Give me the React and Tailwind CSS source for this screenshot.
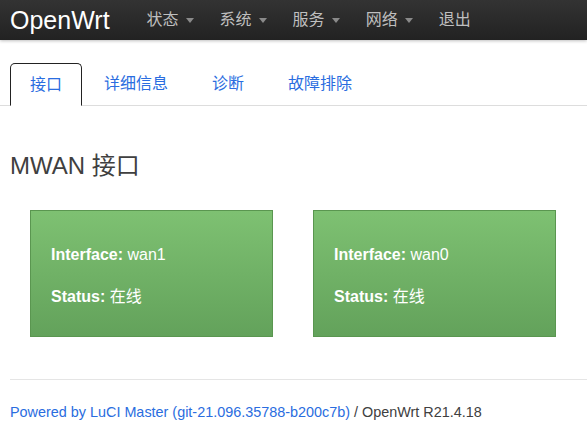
const FONT = { fontFamily: '"Liberation Sans", Arial, "Noto Sans CJK SC", sans-serif' }

const nav = [
  { label: '状态', menu: true },
  { label: '系统', menu: true },
  { label: '服务', menu: true },
  { label: '网络', menu: true },
  { label: '退出', menu: false },
]

const tabs = ['接口', '详细信息', '诊断', '故障排除']

const ifaces = [
  { name: 'wan1', status: '在线' },
  { name: 'wan0', status: '在线' },
]

function Caret() {
  return <span className="ml-[7px] inline-block h-0 w-0 border-x-[4px] border-t-[5px] border-x-transparent border-t-[#8a8a8a] align-middle" />
}

export default function App() {
  return (
    <div className="min-h-[435px] bg-white text-[#404040]" style={FONT}>
      <header className="flex h-10 items-center bg-gradient-to-b from-[#333] to-[#222] pl-[10px] shadow-[0_1px_3px_rgba(0,0,0,0.25)]">
        <a className="mr-[37px] text-[25px] leading-none text-white">OpenWrt</a>
        <nav className="flex items-center gap-[26px] text-[16px] text-[#bfbfbf]">
          {nav.map((n) => (
            <span key={n.label} className="flex items-center">
              {n.label}
              {n.menu && <Caret />}
            </span>
          ))}
        </nav>
      </header>

      <div className="mt-[23px] flex h-[43px] items-stretch border-b border-[#ddd] pl-[10px] text-[16px] text-[#2a6de0]">
        {tabs.map((t, i) => (
          <div
            key={t}
            className={
              i === 0
                ? '-mb-px flex items-center rounded-t-[5px] border border-b-white border-[#222] bg-white px-[19px]'
                : 'flex items-center px-[22px]'
            }
          >
            {t}
          </div>
        ))}
      </div>

      <h2 className="mt-[45px] pl-[10px] text-[24px] leading-[30px] text-[#404040]">MWAN 接口</h2>

      <div className="mt-[29px] flex gap-[40px] pl-[30px]">
        {ifaces.map((f) => (
          <div
            key={f.name}
            className="flex h-[127px] w-[243px] flex-col justify-center gap-[23px] border border-[#5a9650] bg-gradient-to-b from-[#7ec172] to-[#63a25b] pl-[20px] pt-[4px] text-[16px] leading-[19px] text-white"
          >
            <div><b>Interface:</b> {f.name}</div>
            <div><b>Status:</b> {f.status}</div>
          </div>
        ))}
      </div>

      <div className="ml-[10px] mt-[42px] border-t border-[#e5e5e5]" />

      <footer className="mt-[22px] pl-[10px] text-[14.4px]">
        <span className="text-[#2a6de0]">Powered by LuCI Master (git-21.096.35788-b200c7b)</span>
        <span className="text-[#404040]"> / OpenWrt R21.4.18</span>
      </footer>
    </div>
  )
}
